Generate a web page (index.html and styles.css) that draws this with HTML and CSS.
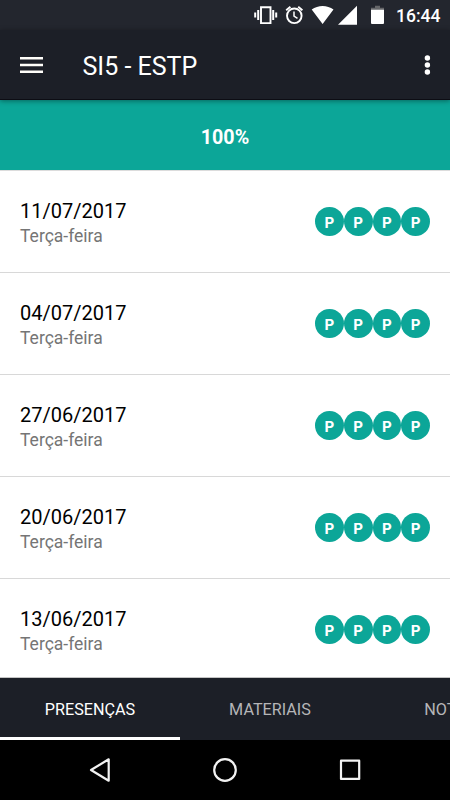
FILE: index.html
```html
<!DOCTYPE html>
<html lang="pt-BR">
<head>
<meta charset="utf-8">
<title>SI5 - ESTP</title>
<link rel="stylesheet" href="styles.css">
</head>
<body>
<div class="status">
  <svg class="status-icons" width="150" height="30" viewBox="0 0 150 30" fill="#fff">
    <path fill="none" stroke="#fff" stroke-width="1.9" d="M21 7.3h9.500v15.800H21z"/>
    <path d="M17.200 10h2v10h-2zM14.200 12.500h2v5h-2zM32.200 10h2v10h-2zM35.200 12.500h2v5h-2z"/>
    <g fill="none" stroke="#fff" stroke-width="1.9"><circle cx="54.300" cy="15.800" r="7.300"/><path stroke-width="1.500" d="M54 11.500v4.700l3.500 2.200"/><path d="M46.200 10.300l4.200-3.600M62.400 10.300l-4.200-3.600"/></g>
    <path d="M71.700 9.500C78 4.700 87.300 4.700 93.500 9.500L82.600 24zM98 24.700L117 5.700v19z"/>
    <path fill="#656669" d="M135 5.700h5v2h4V10h-13V7.700h4z"/><path d="M131 9.700h13V23q0 1-1 1h-11q-1 0-1-1z"/>
  </svg>
  <span class="clock">16:44</span>
</div>
<header class="toolbar">
  <svg class="menu" width="23" height="18" viewBox="0 0 23 18" fill="#fffefa"><path d="M0 1h23v2.500H0zM0 7.800h23v2.500H0zM0 14.600h23v2.500H0z"/></svg>
  <h1>SI5 - ESTP</h1>
  <svg class="more" width="8" height="22" viewBox="0 0 8 22" fill="#fff"><circle cx="4.400" cy="4" r="2.700"/><circle cx="4.400" cy="11" r="2.700"/><circle cx="4.400" cy="18" r="2.700"/></svg>
</header>
<div class="total">100%</div>
<main class="list">
  <div class="row"><div><div class="date">11/07/2017</div><div class="day">Terça-feira</div></div><div class="marks"><b>P</b><b>P</b><b>P</b><b>P</b></div></div>
  <div class="row"><div><div class="date">04/07/2017</div><div class="day">Terça-feira</div></div><div class="marks"><b>P</b><b>P</b><b>P</b><b>P</b></div></div>
  <div class="row"><div><div class="date">27/06/2017</div><div class="day">Terça-feira</div></div><div class="marks"><b>P</b><b>P</b><b>P</b><b>P</b></div></div>
  <div class="row"><div><div class="date">20/06/2017</div><div class="day">Terça-feira</div></div><div class="marks"><b>P</b><b>P</b><b>P</b><b>P</b></div></div>
  <div class="row"><div><div class="date">13/06/2017</div><div class="day">Terça-feira</div></div><div class="marks"><b>P</b><b>P</b><b>P</b><b>P</b></div></div>
</main>
<nav class="tabs"><div class="tab active">PRESENÇAS</div><div class="tab">MATERIAIS</div><div class="tab">NOTAS</div></nav>
<footer class="system">
  <svg width="450" height="60" viewBox="0 0 450 60" fill="none" stroke="#f2f2f2" stroke-width="2.200" stroke-linejoin="round"><path d="M108.700 19.300v21.400L91 30z"/><circle cx="225" cy="30" r="10.800"/><path d="M341 20.700h18.200v18.200H341z"/></svg>
</footer>
</body>
</html>
```
FILE: styles.css
```css
* { box-sizing: border-box; }
body {
  margin: 0;
  width: 450px;
  height: 800px;
  overflow: hidden;
  display: flex;
  flex-direction: column;
  font-family: Roboto, "Liberation Sans", sans-serif;
  background: #fff;
}
.status {
  flex: none;
  height: 30px;
  display: flex;
  justify-content: flex-end;
  background: #23262e;
  color: #fff;
}
.status-icons { flex: none; margin-right: 6px; }
.clock { width: 54px; font-size: 17.5px; line-height: 32px; font-weight: 500; }
.toolbar {
  flex: none;
  position: relative;
  height: 70px;
  display: flex;
  align-items: center;
  padding: 0 19px 0 20px;
  background: #1c1f27;
  border-bottom: 1px solid #0d0d14;
  box-shadow: 0 1px 5px rgba(0, 0, 0, .4);
  color: #fff;
}
.toolbar h1 {
  flex: 1;
  margin: 5px 0 0 39.5px;
  font-size: 25px;
  line-height: 30px;
  font-weight: 400;
}
.total {
  flex: none;
  height: 70px;
  line-height: 75px;
  background: #0ca698;
  color: #fff;
  text-align: center;
  font-size: 19.7px;
  font-weight: 700;
}
.list { flex: none; height: 508px; overflow: hidden; border-top: 1px solid #dcdcdc; border-bottom: 1px solid #c4c4c4; }
.row {
  height: 101.9px;
  display: flex;
  justify-content: space-between;
  align-items: center;
  padding: 0 20px;
  border-bottom: 1px solid #d8d8d8;
}
.date { padding-top: 5px; font-size: 20px; line-height: 26px; color: #000; }
.day { font-size: 17.5px; line-height: 25px; color: #757575; }
.marks { display: flex; }
.marks b {
  width: 28.75px;
  height: 29px;
  border-radius: 50%;
  background: #0ca698;
  color: #fff;
  text-align: center;
  font: 700 15px/31px Inter, sans-serif;
}
.tabs { flex: none; height: 62px; display: flex; background: #1c1f27; overflow: hidden; }
.tab {
  flex: none;
  width: 180px;
  line-height: 63px;
  height: 62px;
  text-align: center;
  font-size: 16.2px;
  color: #b5b5b7;
}
.tab.active { color: #fff; border-bottom: 3px solid #fff; }
.system { flex: none; height: 60px; background: #000; }
.system svg { display: block; }
```
